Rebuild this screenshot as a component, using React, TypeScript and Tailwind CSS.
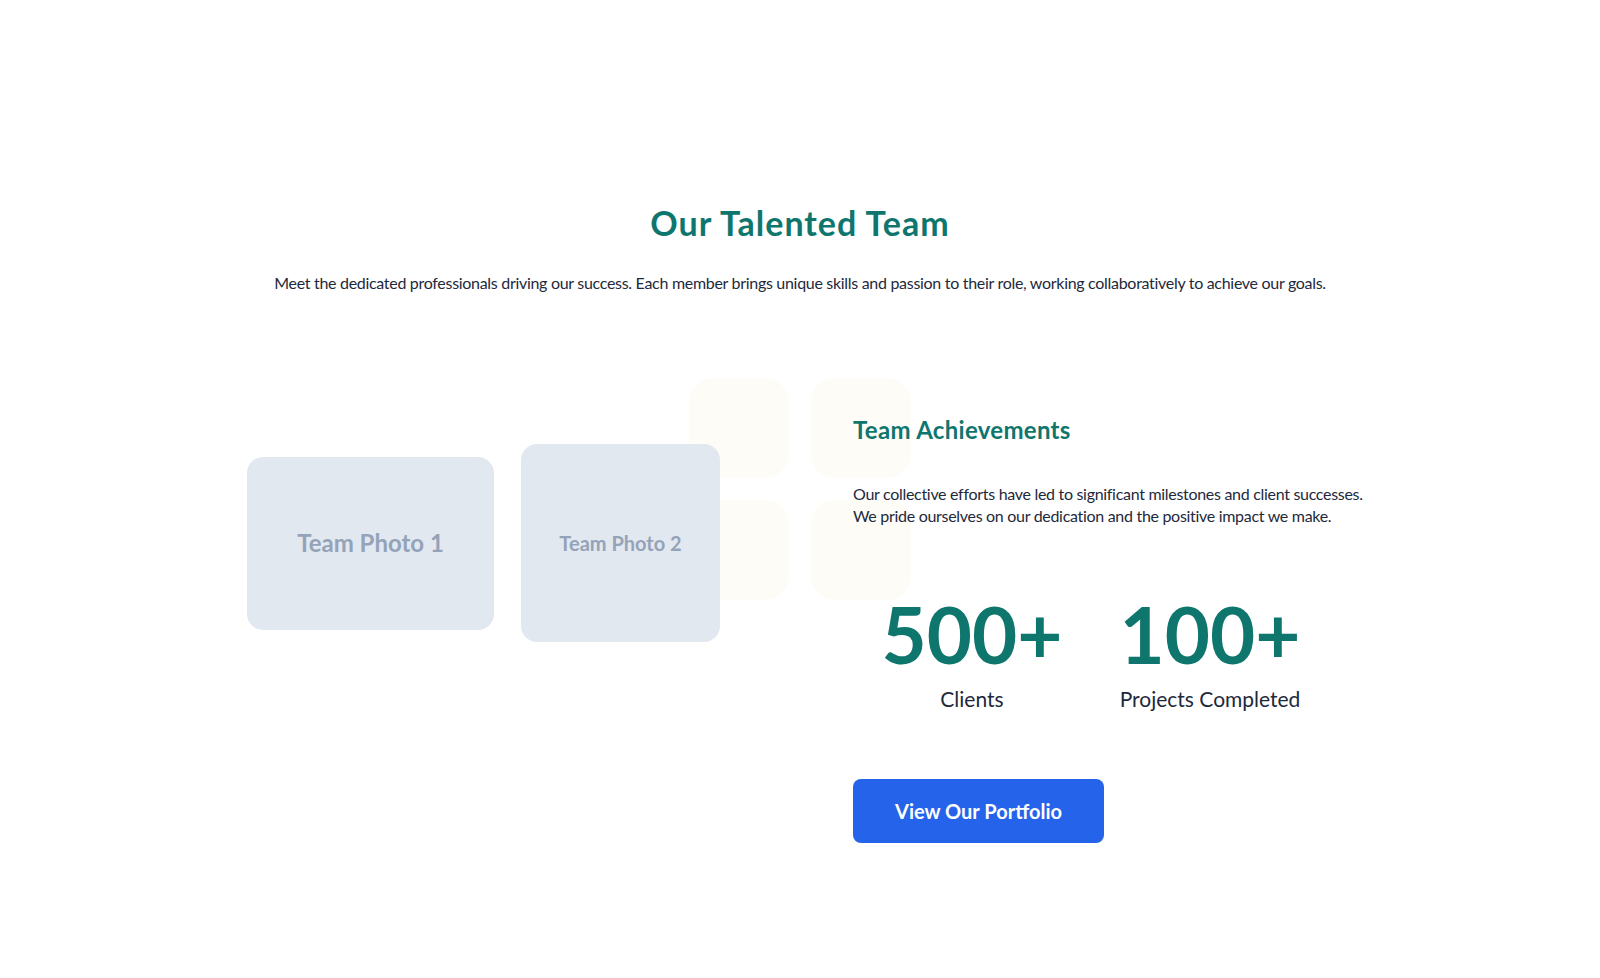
import React from "react";

const outfit = { fontFamily: "Lato, 'Noto Sans', sans-serif" };

export default function App() {
  return (
    <div className="min-h-[978px] w-full overflow-hidden bg-white" style={outfit}>
      <section className="mx-auto w-[1106px] pt-[203px]">
        <h2 className="text-center text-[34px] leading-10 font-bold tracking-[1px] text-[#0f766e]">
          Our Talented Team
        </h2>
        <p className="mt-[28px] text-center text-base leading-6 tracking-[-0.3px] text-[#1e293b]">
          Meet the dedicated professionals driving our success. Each member brings unique skills and passion to their role, working collaboratively to achieve our goals.
        </p>

        <div className="mt-[83px] flex items-start gap-12">
          <div className="relative flex h-[330px] w-[558px] shrink-0 items-center">
            <div className="absolute left-[442px] top-0 grid w-[222px] grid-cols-[100px_100px] gap-[22px]">
              <div className="h-[100px] w-[100px] rounded-3xl bg-[#fdfcf6]" />
              <div className="h-[100px] w-[100px] rounded-3xl bg-[#fdfcf6]" />
              <div className="h-[100px] w-[100px] rounded-3xl bg-[#fdfcf6]" />
              <div className="h-[100px] w-[100px] rounded-3xl bg-[#fdfcf6]" />
            </div>
            <div className="relative z-10 flex items-center gap-[27px]">
              <div className="flex h-[173px] w-[247px] items-center justify-center rounded-2xl bg-[#e2e8f0]">
                <span className="text-2xl font-bold text-[#94a3b8]">Team Photo 1</span>
              </div>
              <div className="flex h-[198px] w-[199px] items-center justify-center rounded-2xl bg-[#e2e8f0]">
                <span className="text-xl font-bold text-[#94a3b8]">Team Photo 2</span>
              </div>
            </div>
          </div>

          <div className="relative z-10 w-[530px] shrink-0 pt-[36px]">
            <h3 className="text-2xl leading-8 font-bold tracking-[0.3px] text-[#0f766e]">Team Achievements</h3>
            <p className="mt-[37px] text-base leading-[22px] tracking-[-0.3px] text-[#1e293b]">
              Our collective efforts have led to significant milestones and client successes. We pride ourselves on our dedication and the positive impact we make.
            </p>
            <div className="mt-[68px] flex">
              <div className="w-[238px] text-center">
                <div className="text-[78px] leading-[78px] font-bold text-[#0f766e]">500+</div>
                <div className="mt-3 text-[21px] leading-7 text-[#1e293b]">Clients</div>
              </div>
              <div className="w-[238px] text-center">
                <div className="text-[78px] leading-[78px] font-bold text-[#0f766e]">100+</div>
                <div className="mt-3 text-[21px] leading-7 text-[#1e293b]">Projects Completed</div>
              </div>
            </div>
            <button className="mt-[66px] flex h-16 w-[251px] items-center justify-center rounded-lg bg-[#2563eb] text-xl font-bold text-white">
              View Our Portfolio
            </button>
          </div>
        </div>
      </section>
    </div>
  );
}
